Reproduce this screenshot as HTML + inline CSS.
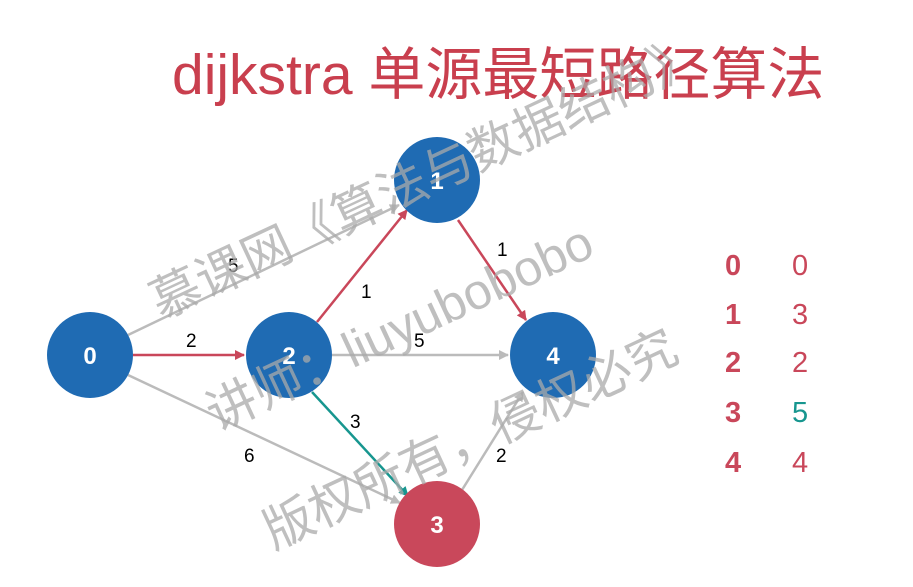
<!DOCTYPE html>
<html><head><meta charset="utf-8"><style>
body{margin:0;width:913px;height:587px;background:#fff;overflow:hidden;position:relative;font-family:"Liberation Sans","Noto Sans CJK SC",sans-serif}
.title{position:absolute;left:172px;top:40px;font-size:57px;color:#c93f4e;white-space:nowrap;line-height:70px}
.wm{position:absolute;color:rgba(170,170,170,0.75);font-size:50px;white-space:nowrap;transform-origin:0 0;line-height:54px}
.tb{position:absolute;font-size:29px;color:#c9475a}
</style></head><body>
<div class="title">dijkstra 单源最短路径算法</div>
<svg width="913" height="587" style="position:absolute;left:0;top:0">
<defs>
<marker id="g" markerWidth="10" markerHeight="10" refX="9" refY="5" orient="auto" markerUnits="userSpaceOnUse"><path d="M0,0L10,5L0,10z" fill="#bbb"/></marker>
<marker id="r" markerWidth="10" markerHeight="10" refX="9" refY="5" orient="auto" markerUnits="userSpaceOnUse"><path d="M0,0L10,5L0,10z" fill="#c9475a"/></marker>
<marker id="t" markerWidth="10" markerHeight="10" refX="9" refY="5" orient="auto" markerUnits="userSpaceOnUse"><path d="M0,0L10,5L0,10z" fill="#17968f"/></marker>
</defs>
<g stroke-width="2.5" fill="none">
<line x1="128" y1="335" x2="399" y2="205" stroke="#bbb" marker-end="url(#g)"/>
<line x1="133" y1="355" x2="244" y2="355" stroke="#c9475a" marker-end="url(#r)"/>
<line x1="128" y1="375" x2="400" y2="503" stroke="#bbb" marker-end="url(#g)"/>
<line x1="317" y1="322" x2="407" y2="210" stroke="#c9475a" marker-end="url(#r)"/>
<line x1="332" y1="355" x2="508" y2="355" stroke="#bbb" marker-end="url(#g)"/>
<line x1="312" y1="392" x2="408" y2="496" stroke="#17968f" marker-end="url(#t)"/>
<line x1="458" y1="220" x2="526" y2="320" stroke="#c9475a" marker-end="url(#r)"/>
<line x1="462" y1="490" x2="523" y2="392" stroke="#bbb" marker-end="url(#g)"/>
</g>
<g font-family="Liberation Sans" font-size="19" fill="#000">
<text x="228" y="272">5</text><text x="186" y="347">2</text><text x="244" y="462">6</text>
<text x="361" y="298">1</text><text x="414" y="347">5</text><text x="350" y="428">3</text>
<text x="497" y="256">1</text><text x="496" y="462">2</text>
</g>
<g font-family="Liberation Sans" font-weight="bold" font-size="24" fill="#fff" text-anchor="middle">
<circle cx="90" cy="355" r="43" fill="#1f6bb3"/><text x="90" y="364">0</text>
<circle cx="437" cy="180" r="43" fill="#1f6bb3"/><text x="437" y="189">1</text>
<circle cx="289" cy="355" r="43" fill="#1f6bb3"/><text x="289" y="364">2</text>
<circle cx="553" cy="355" r="43" fill="#1f6bb3"/><text x="553" y="364">4</text>
<circle cx="437" cy="524" r="43" fill="#c9485b"/><text x="437" y="533">3</text>
</g>
</svg>
<div class="wm" style="left:142px;top:280px;transform:rotate(-25deg)">慕课网《算法与数据结构》</div>
<div class="wm" style="left:198px;top:392px;transform:rotate(-25deg)">讲师：liuyubobobo</div>
<div class="wm" style="left:255px;top:510px;transform:rotate(-25deg)">版权所有，侵权必究</div>
<div class="tb" style="left:725px;top:250px;font-weight:bold">0</div><div class="tb" style="left:792px;top:250px">0</div>
<div class="tb" style="left:725px;top:299px;font-weight:bold">1</div><div class="tb" style="left:792px;top:299px">3</div>
<div class="tb" style="left:725px;top:347px;font-weight:bold">2</div><div class="tb" style="left:792px;top:347px">2</div>
<div class="tb" style="left:725px;top:397px;font-weight:bold">3</div><div class="tb" style="left:792px;top:397px;color:#17968f">5</div>
<div class="tb" style="left:725px;top:447px;font-weight:bold">4</div><div class="tb" style="left:792px;top:447px">4</div>
</body></html>
